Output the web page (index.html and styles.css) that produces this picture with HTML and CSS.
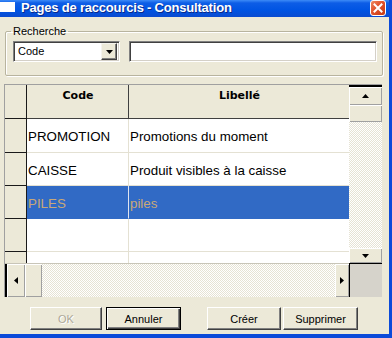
FILE: index.html
```html
<!DOCTYPE html>
<html>
<head>
<meta charset="utf-8">
<title>Pages de raccourcis - Consultation</title>
<link rel="stylesheet" href="styles.css">
</head>
<body>
<div class="window">
  <div class="titlebar">
    <span class="appicon"></span>
    <span class="title">Pages de raccourcis - Consultation</span>
    <span class="close"><svg width="10" height="10" viewBox="0 0 10 10"><path d="M1.5 1.5L8.5 8.5M8.5 1.5L1.5 8.5" stroke="#fff" stroke-width="2" stroke-linecap="square"/></svg></span>
  </div>
  <div class="content">
    <fieldset class="group">
      <legend>Recherche</legend>
      <div class="search">
        <div class="combo">
          <span class="combo-text">Code</span>
          <span class="dropbtn"><svg width="7" height="4" viewBox="0 0 7 4"><path d="M0 0h7L3.5 4z"/></svg></span>
        </div>
        <div class="textbox"></div>
      </div>
    </fieldset>
    <div class="grid">
      <div class="viewport">
        <table class="table">
          <colgroup><col class="c-rh"><col class="c-code"><col class="c-lib"></colgroup>
          <thead>
            <tr class="hrow"><th class="rh"></th><th>Code</th><th>Libellé</th></tr>
          </thead>
          <tbody>
            <tr class="r1"><td class="rh"></td><td>PROMOTION</td><td>Promotions du moment</td></tr>
            <tr><td class="rh"></td><td>CAISSE</td><td>Produit visibles à la caisse</td></tr>
            <tr class="sel"><td class="rh"></td><td>PILES</td><td>piles</td></tr>
            <tr><td class="rh"></td><td></td><td></td></tr>
            <tr><td class="rh"></td><td></td><td></td></tr>
          </tbody>
        </table>
      </div>
      <div class="vscroll">
        <span class="vedge"></span>
        <span class="sbtn up"><svg width="7" height="4" viewBox="0 0 7 4"><path d="M0 4h7L3.5 0z"/></svg></span>
        <span class="sbtn vthumb"></span>
        <span class="track"></span>
        <span class="sbtn down"><svg width="7" height="4" viewBox="0 0 7 4"><path d="M0 0h7L3.5 4z"/></svg></span>
      </div>
      <div class="hscroll">
        <span class="hedge"></span>
        <span class="sbtn left"><svg width="4" height="7" viewBox="0 0 4 7"><path d="M4 0v7L0 3.5z"/></svg></span>
        <span class="sbtn hthumb"></span>
        <span class="track"></span>
        <span class="sbtn right"><svg width="4" height="7" viewBox="0 0 4 7"><path d="M0 0v7L4 3.5z"/></svg></span>
      </div>
      <div class="corner"></div>
    </div>
    <div class="buttons">
      <button class="btn ok" disabled>OK</button>
      <button class="btn annuler default">Annuler</button>
      <button class="btn creer">Créer</button>
      <button class="btn suppr">Supprimer</button>
    </div>
  </div>
</div>
</body>
</html>
```

FILE: styles.css
```css
* { box-sizing: border-box; }
html, body { margin: 0; padding: 0; }
body {
  width: 392px;
  height: 338px;
  overflow: hidden;
  font-family: "Liberation Sans", Arial, sans-serif;
  font-size: 11px;
  color: #000;
  background: #ece9d8;
}
.window {
  width: 392px;
  height: 338px;
  display: flex;
  flex-direction: column;
  background: #ece9d8;
  border-right: 3px solid #0b4ad9;
  border-bottom: 4px solid #0b4ad9;
}
.titlebar {
  height: 17px;
  flex: none;
  display: flex;
  align-items: flex-start;
  background: linear-gradient(to bottom, #3d8bf7 0, #0d5de6 3px, #0054e3 60%, #0a4bd0 100%);
  color: #fff;
}
.appicon {
  width: 15px;
  height: 10px;
  margin-top: 2px;
  background: #fff;
  flex: none;
}
.title {
  margin-left: 6px;
  font-weight: bold;
  font-size: 13px;
  letter-spacing: -0.2px;
  line-height: 16px;
  text-shadow: 1px 1px 0 #0a2a8a;
  white-space: nowrap;
  flex: 1;
}
.close {
  width: 16px;
  height: 16px;
  margin-right: 3px;
  flex: none;
  display: flex;
  align-items: center;
  justify-content: center;
  border: 1px solid #fff;
  border-radius: 3px;
  background: linear-gradient(135deg, #ef8a63 0%, #e0512b 45%, #c43a14 100%);
}
.content {
  flex: 1;
  display: flex;
  flex-direction: column;
}
.group {
  margin: 8px 0 0 5px;
  width: 378px;
  padding: 0 5px 13px 5px;
  border: 1px solid #b8b49f;
  border-radius: 2px;
  box-shadow: inset 1px 1px 0 #fff, 1px 1px 0 #fff;
  min-inline-size: 0;
}
.group legend {
  padding: 0 2px;
  font-size: 11px;
  line-height: 13px;
}
.search {
  display: flex;
  gap: 9px;
  margin-top: 3px;
  margin-left: 2px;
}
.combo {
  width: 107px;
  height: 21px;
  display: flex;
  align-items: center;
  background: #fff;
  border: 1px solid;
  border-color: #808080 #fff #fff #808080;
  box-shadow: inset 1px 1px 0 #404040, inset -1px -1px 0 #d4d0c8;
  padding: 2px 2px 2px 4px;
}
.combo-text {
  flex: 1;
  line-height: 13px;
}
.dropbtn {
  width: 16px;
  height: 17px;
  flex: none;
  display: flex;
  align-items: center;
  justify-content: center;
  background: #ece9d8;
  border: 1px solid;
  border-color: #f4f3ee #404040 #404040 #f4f3ee;
  box-shadow: inset -1px -1px 0 #808080;
}
.textbox {
  width: 248px;
  height: 21px;
  background: #fff;
  border: 1px solid;
  border-color: #808080 #fff #fff #808080;
  box-shadow: inset 1px 1px 0 #404040, inset -1px -1px 0 #d4d0c8;
}
.grid {
  margin: 8px 0 0 4px;
  width: 378px;
  display: grid;
  grid-template-columns: 344px 33px;
  grid-template-rows: 178px 34px;
  border-top: 1px solid #a0a0a0;
  border-left: 1px solid #a0a0a0;
}
.viewport {
  overflow: hidden;
  background: #fff;
}
.table {
  table-layout: fixed;
  width: 344px;
  border-collapse: separate;
  border-spacing: 0;
  font-size: 13.33px;
}
.c-rh { width: 22px; }
.c-code { width: 102px; }
.c-lib { width: 220px; }
.table th, .table td {
  padding: 0 0 0 1px;
  white-space: nowrap;
  overflow: hidden;
}
.table th {
  background: #ece9d8;
  font-family: "DejaVu Sans", Verdana, sans-serif;
  font-size: 11px;
  font-weight: bold;
  line-height: 13px;
  text-align: center;
  vertical-align: top;
  padding-top: 4px;
  border-right: 1px solid #404040;
  border-bottom: 1px solid #404040;
}
.table th:last-child { border-right: 0; }
.hrow { height: 34px; }
.table tbody tr { height: 33px; }
.table tbody tr.r1 { height: 34px; }
.table td {
  background: #fff;
  border-right: 1px solid #e4e1d3;
  border-bottom: 1px solid #e4e1d3;
  line-height: 15px;
  vertical-align: middle;
  padding-top: 2px;
}
.table td:last-child { border-right: 0; }
.table td.rh, .table th.rh {
  background: #ece9d8;
  border-right: 1px solid #1a1a1a;
  border-bottom: 1px solid #1a1a1a;
  padding: 0;
}
.table tr.sel td {
  background: #316ac5;
  color: #c8a878;
  border-right-color: #dfe4f0;
  border-bottom-color: #316ac5;
}
.table tr.sel td.rh {
  background: #ece9d8;
  border-right-color: #1a1a1a;
  border-bottom-color: #1a1a1a;
}
.vscroll {
  display: flex;
  flex-direction: column;
}
.vedge {
  height: 2px;
  background: #000;
  flex: none;
}
.sbtn {
  flex: none;
  display: flex;
  align-items: center;
  justify-content: center;
  background: #ece9d8;
  box-shadow: inset 1px 1px 0 #fff, inset -1px -1px 0 #a0a0a0;
}
.up { height: 18px; }
.vthumb { height: 17px; }
.down { height: 15px; }
.track {
  flex: 1;
  background: repeating-conic-gradient(#fff 0 25%, #e6e3d4 0 50%) 0 0 / 2px 2px;
}
.hscroll {
  display: flex;
  border-top: 1px solid #c8c5b8;
}
.hedge {
  width: 2px;
  background: #000;
  flex: none;
}
.left { width: 18px; }
.hthumb { width: 17px; }
.right { width: 14px; }
.corner {
  background: #d6d3cb;
  border-top: 1px solid #000;
  border-left: 1px solid #000;
}
.buttons {
  display: flex;
  margin-top: 10px;
  padding-left: 30px;
  height: 23px;
}
.btn {
  height: 23px;
  margin: 0;
  padding: 0;
  font-family: "Liberation Sans", Arial, sans-serif;
  font-size: 11px;
  color: #000;
  background: #ece9d8;
  border: 1px solid;
  border-color: #fff #404040 #404040 #fff;
  box-shadow: inset -1px -1px 0 #808080;
  border-radius: 0;
}
.ok { width: 72px; color: #aca899; text-shadow: 1px 1px 0 #fff; }
.annuler { width: 75px; margin-left: 4px; }
.default {
  border: 1px solid #000;
  box-shadow: inset 1px 1px 0 #fff, inset -1px -1px 0 #404040, inset -2px -2px 0 #808080;
}
.creer { width: 74px; margin-left: 26px; }
.suppr { width: 75px; margin-left: 2px; }
```
